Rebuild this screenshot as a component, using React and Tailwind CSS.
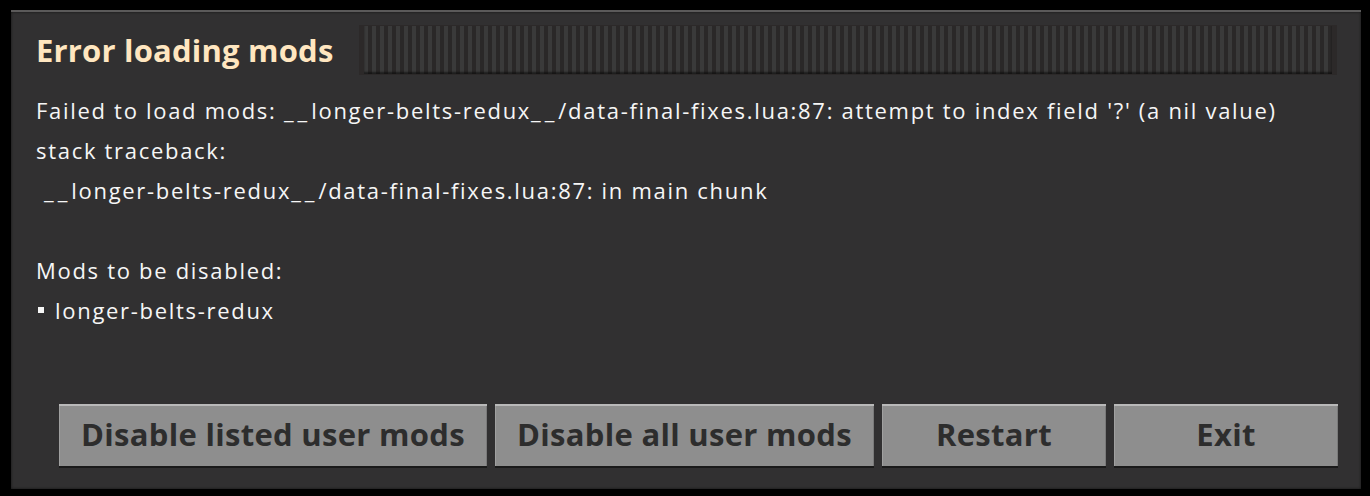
import React from "react";

const BODY_FONT = { fontFamily: '"Open Sans", "Noto Sans", sans-serif' };

const BUTTONS = [
  { label: "Disable listed user mods", width: "w-[428px]" },
  { label: "Disable all user mods", width: "w-[379px]" },
  { label: "Restart", width: "w-[224px]" },
  { label: "Exit", width: "w-[224px]" },
];

function Underscores() {
  return <span className="tracking-[4px]">__</span>;
}

export default function App() {
  return (
    <div className="w-[1370px] h-[496px] bg-black pt-[10px] pl-[11px]" style={BODY_FONT}>
      <div className="w-[1350px] h-[479px] bg-[#313031] border-t-[2px] border-[#5b5a5a] shadow-[inset_0_0_3px_rgba(0,0,0,0.6)] flex flex-col">
        {/* Title bar */}
        <div className="flex items-center h-[50px] mt-[13px] pl-[25px] pr-[24px]">
          <h1 className="text-[31px] font-bold tracking-[0.2px] text-[#ffe6c0] leading-none">Error loading mods</h1>
          <div className="flex-1 ml-[25px] h-[50px] bg-[#2c2929] px-[5px] py-[1px]">
            <div className="h-full w-full bg-[repeating-linear-gradient(90deg,#3a3a3a_0px,#3a3a3a_4px,#2a2828_4px,#2a2828_8px)] shadow-[inset_0_-2px_2px_rgba(0,0,0,0.5)]" />
          </div>
        </div>

        {/* Message */}
        <div className="pl-[25px] pt-[15px] text-[22px] tracking-[1.7px] leading-[40px] text-[#f6f6f6]">
          <div>
            Failed to load mods: <Underscores />longer-belts-redux<Underscores />/data-final-fixes.lua:87: attempt to index field '?' (a nil value)
          </div>
          <div>stack traceback:</div>
          <div className="pl-[8px]">
            <Underscores />longer-belts-redux<Underscores />/data-final-fixes.lua:87: in main chunk
          </div>
          <div className="h-[40px]" />
          <div>Mods to be disabled:</div>
          <div className="flex items-center">
            <span className="w-[6px] h-[6px] bg-[#f6f6f6] ml-[2px] mr-[11px]" />
            longer-belts-redux
          </div>
        </div>

        {/* Buttons */}
        <div className="mt-auto mb-[23px] flex gap-[8px] pl-[48px]">
          {BUTTONS.map((b) => (
            <button
              key={b.label}
              className={`${b.width} h-[62px] pb-[4px] bg-[#8e8e8e] border-t-[2px] border-[#b9b9b9] shadow-[0_2px_0_#1a1a1a,inset_1px_0_0_#a0a0a0,inset_-1px_0_0_#7a7a7a] text-[#2d2d2d] text-[31px] font-bold tracking-[0.3px] leading-none`}
            >
              {b.label}
            </button>
          ))}
        </div>
      </div>
    </div>
  );
}
